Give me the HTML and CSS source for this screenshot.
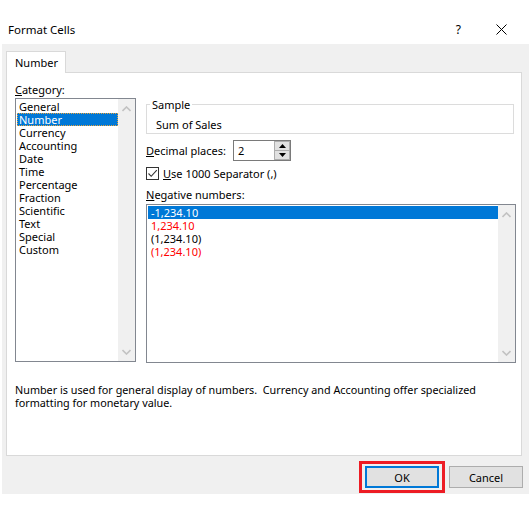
FILE: index.html
```html
<!DOCTYPE html>
<html>
<head>
<meta charset="utf-8">
<title>Format Cells</title>
<link rel="stylesheet" href="styles.css">
</head>
<body>
<div class="titlebar">
  <span class="title">Format Cells</span>
  <span class="help">?</span>
  <span class="close"><svg width="11" height="11" viewBox="0 0 11 11"><path d="M0.5 0.5 L10.5 10.5 M10.5 0.5 L0.5 10.5" stroke="#000" stroke-width="1" fill="none"/></svg></span>
</div>
<div class="dialog">
  <div class="tabs"><div class="tab">Number</div></div>
  <div class="panel">
    <div class="cols">
      <div class="left">
        <div class="label"><u>C</u>ategory:</div>
        <div class="listbox cat">
          <ul class="items">
            <li>General</li>
            <li class="sel focus">Number</li>
            <li>Currency</li>
            <li>Accounting</li>
            <li>Date</li>
            <li>Time</li>
            <li>Percentage</li>
            <li>Fraction</li>
            <li>Scientific</li>
            <li>Text</li>
            <li>Special</li>
            <li>Custom</li>
          </ul>
          <div class="scrollbar">
            <div class="arrow"><svg width="9" height="6" viewBox="0 0 9 6"><path d="M0.5 5 L4.5 1 L8.5 5" stroke="#c2c2c2" stroke-width="1.6" fill="none"/></svg></div>
            <div class="arrow"><svg width="9" height="6" viewBox="0 0 9 6"><path d="M0.5 1 L4.5 5 L8.5 1" stroke="#c2c2c2" stroke-width="1.6" fill="none"/></svg></div>
          </div>
        </div>
      </div>
      <div class="right">
        <fieldset class="sample">
          <legend>Sample</legend>
          <div class="sample-text">Sum of Sales</div>
        </fieldset>
        <div class="decimal-row">
          <span class="decimal-label"><u>D</u>ecimal places:</span>
          <div class="spin">
            <span class="spin-value">2</span>
            <div class="spin-btns">
              <div class="spin-btn"><svg width="7" height="4" viewBox="0 0 7 4"><path d="M0 4 L3.5 0 L7 4 Z" fill="#000"/></svg></div>
              <div class="spin-btn"><svg width="7" height="4" viewBox="0 0 7 4"><path d="M0 0 L3.5 4 L7 0 Z" fill="#000"/></svg></div>
            </div>
          </div>
        </div>
        <div class="check-row">
          <span class="checkbox"><svg width="11" height="11" viewBox="0 0 11 11"><path d="M1.5 5.5 L4.2 8.3 L9.8 2.2" stroke="#333" stroke-width="1.1" fill="none"/></svg></span>
          <span><u>U</u>se 1000 Separator (,)</span>
        </div>
        <div class="label neg-label"><u>N</u>egative numbers:</div>
        <div class="listbox neg">
          <ul class="items">
            <li class="sel">-1,234.10</li>
            <li class="red">1,234.10</li>
            <li>(1,234.10)</li>
            <li class="red">(1,234.10)</li>
          </ul>
          <div class="scrollbar">
            <div class="arrow"><svg width="9" height="6" viewBox="0 0 9 6"><path d="M0.5 5 L4.5 1 L8.5 5" stroke="#c2c2c2" stroke-width="1.6" fill="none"/></svg></div>
            <div class="arrow"><svg width="9" height="6" viewBox="0 0 9 6"><path d="M0.5 1 L4.5 5 L8.5 1" stroke="#c2c2c2" stroke-width="1.6" fill="none"/></svg></div>
          </div>
        </div>
      </div>
    </div>
    <p class="desc">Number is used for general display of numbers.&nbsp; Currency and Accounting offer specialized<br>formatting for monetary value.</p>
  </div>
  <div class="buttons">
    <div class="highlight"><button class="btn default">OK</button></div>
    <button class="btn">Cancel</button>
  </div>
</div>
</body>
</html>
```

FILE: styles.css
```css
* { box-sizing: border-box; }

html, body {
  margin: 0;
  padding: 0;
  background: #ffffff;
}

body {
  width: 529px;
  height: 515px;
  overflow: hidden;
  font-family: "Noto Sans", "Open Sans", sans-serif;
  font-size: 11px;
  color: #000;
}

.titlebar {
  height: 44px;
  display: flex;
  align-items: center;
  padding: 14px 22px 0 8px;
}

.title {
  font-size: 11.5px;
  flex: 1;
}

.help {
  font-size: 12px;
  margin-right: 35px;
}

.close {
  display: flex;
  width: 11px;
  height: 11px;
}

.dialog {
  margin-left: 2px;
  height: 450px;
  background: #f0f0f0;
  padding: 7px 0 0 4px;
}

.tabs {
  display: flex;
  height: 21px;
}

.tab {
  width: 60px;
  height: 22px;
  background: #fff;
  border: 1px solid #d9d9d9;
  border-bottom: none;
  padding: 3px 0 0 8px;
  line-height: 15px;
  position: relative;
  z-index: 1;
}

.panel {
  width: 516px;
  height: 384px;
  background: #fff;
  border: 1px solid #d9d9d9;
  padding: 9px 0 0 8px;
}

.cols {
  display: flex;
  gap: 10px;
}

.left {
  width: 121px;
}

.label {
  line-height: 15px;
  height: 15px;
}

.listbox {
  border: 1px solid #828790;
  display: flex;
  background: #fff;
}

.cat {
  margin-top: 1px;
  height: 264px;
}

.items {
  list-style: none;
  margin: 0;
  padding: 1px 0 0 0;
  flex: 1;
}

.items li {
  height: 13px;
  line-height: 13px;
  margin-left: 1px;
  padding-left: 2px;
  white-space: nowrap;
}

.items li.sel {
  background: #0078d7;
  color: #fff;
}

.items li.focus {
  outline: 1px dotted #e8a33c;
  outline-offset: -1px;
}

.items li.red {
  color: #ff0000;
}

.scrollbar {
  width: 17px;
  background: #f0f0f0;
  display: flex;
  flex-direction: column;
  justify-content: space-between;
}

.arrow {
  height: 19px;
  display: flex;
  align-items: center;
  justify-content: center;
}

.right {
  width: 370px;
}

.sample {
  margin: 15px 0 0 0;
  width: 368px;
  border: 1px solid #dcdcdc;
  padding: 5px 0 1px 9px;
}

.sample legend {
  padding: 0 2px;
  margin-left: -6px;
  line-height: 15px;
}

.sample-text {
  line-height: 15px;
}

.decimal-row {
  margin-top: 6px;
  display: flex;
  align-items: center;
  height: 21px;
}

.decimal-label {
  width: 87px;
}

.spin {
  width: 58px;
  height: 21px;
  border: 1px solid #7a7a7a;
  display: flex;
  background: #fff;
}

.spin-value {
  flex: 1;
  padding-left: 4px;
  line-height: 19px;
}

.spin-btns {
  width: 16px;
  display: flex;
  flex-direction: column;
}

.spin-btn {
  flex: 1;
  background: #e1e1e1;
  border: 1px solid #adadad;
  display: flex;
  align-items: center;
  justify-content: center;
}

.spin-btn + .spin-btn {
  border-top: none;
}

.check-row {
  margin-top: 6px;
  display: flex;
  align-items: center;
  gap: 4px;
  height: 13px;
}

.checkbox {
  width: 13px;
  height: 13px;
  border: 1px solid #333;
  display: flex;
  background: #fff;
}

.neg-label {
  margin-top: 7px;
}

.neg {
  margin-top: 2px;
  height: 159px;
}

.neg .items li {
  padding-left: 3px;
}

.desc {
  margin: 20px 0 0 0;
  line-height: 13px;
  font-size: 10.8px;
}

.buttons {
  display: flex;
  justify-content: flex-end;
  align-items: center;
  gap: 4px;
  margin-top: 5px;
  padding-right: 6px;
}

.highlight {
  border: 3px solid #ed1c24;
  padding: 2px 3px;
  display: flex;
}

.btn {
  width: 74px;
  height: 22px;
  background: #e1e1e1;
  border: 1px solid #adadad;
  font-family: "Noto Sans", "Open Sans", sans-serif;
  font-size: 11px;
  color: #000;
  padding: 0;
  margin: 0;
}

.btn.default {
  border: 2px solid #0078d7;
}
```
